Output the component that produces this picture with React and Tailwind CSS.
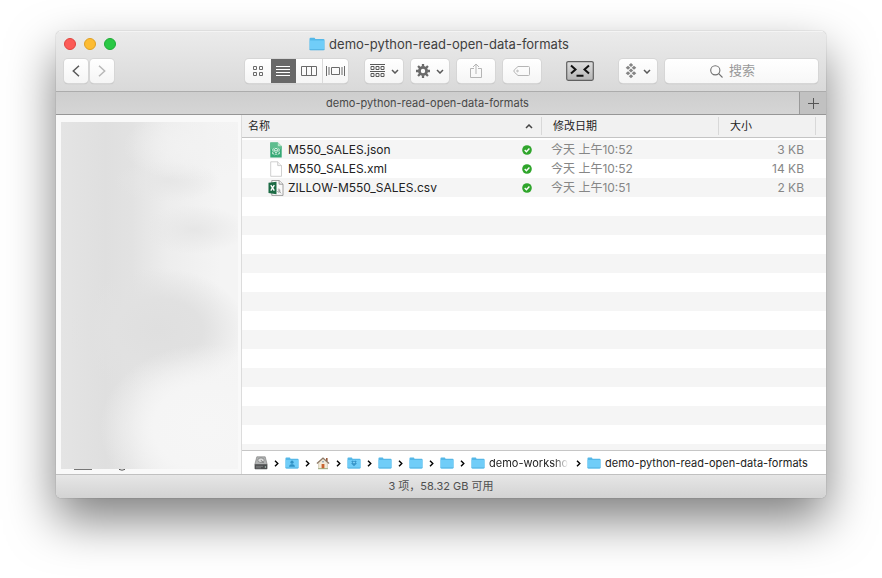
import { clsx } from 'clsx'

const FOLDER_NAME = 'demo-python-read-open-data-formats'

const files = [
  { name: 'M550_SALES.json', icon: JsonIcon, date: '今天 上午10:52', size: '3 KB' },
  { name: 'M550_SALES.xml', icon: BlankIcon, date: '今天 上午10:52', size: '14 KB' },
  { name: 'ZILLOW-M550_SALES.csv', icon: ExcelIcon, date: '今天 上午10:51', size: '2 KB' },
]

const path = [
  { id: 'disk', icon: DriveIcon },
  { id: 'users', icon: UsersFolderIcon },
  { id: 'home', icon: HomeIcon },
  { id: 'dropbox', icon: DropboxFolderIcon },
  { id: 'a', icon: FolderIcon },
  { id: 'b', icon: FolderIcon },
  { id: 'c', icon: FolderIcon },
  { id: 'workshop', icon: FolderIcon, label: 'demo-workshop', faded: true },
  { id: 'current', icon: FolderIcon, label: FOLDER_NAME },
]

function FolderIcon({ className = 'h-3 w-3.5', children }) {
  return (
    <svg viewBox="0 0 16 14" preserveAspectRatio="none" className={clsx('shrink-0', className)}>
      <path d="M.5 2Q.5.7 1.6.7h3.6Q5.9.7 6.3 1.9h8.2q1 0 1 1v9.2q0 1.2-1.1 1.2H1.6Q.5 13.3.5 12.1z" fill="#55b8e8" />
      <path d="M.8 3.4h14.4v8.8q0 .8-.8.8H1.6q-.8 0-.8-.8z" fill="#70cdf8" />
      <path d="M.6 12.6h14.8" stroke="#4faedd" strokeWidth=".8" />
      {children}
    </svg>
  )
}

function UsersFolderIcon() {
  return (
    <FolderIcon>
      <circle cx="8" cy="6" r="1.8" fill="#2f91c4" />
      <path d="M4.6 11.4q.2-2.6 2.4-3h2q2.2.4 2.4 3z" fill="#2f91c4" />
    </FolderIcon>
  )
}

function DropboxFolderIcon() {
  return (
    <FolderIcon>
      <path d="M4.8 5.2 6.6 4.2 8 5.3l1.4-1.1 1.8 1-1.2 1.3 1.2 1.2L8 10.8 4.8 7.7 6 6.5z" fill="#3896ca" />
      <path d="M6.4 6.5 8 5.6l1.6.9L8 7.6z" fill="#85d5f8" />
    </FolderIcon>
  )
}

function DriveIcon() {
  return (
    <svg viewBox="0 0 14 14" className="h-3.5 w-3.5 shrink-0">
      <path d="M2.8.8h8.4l2 7.8H.8z" fill="#b2b4b4" stroke="#777" strokeWidth=".6" />
      <ellipse cx="7" cy="4.2" rx="3.2" ry="2.3" fill="#d9dada" stroke="#787a7a" strokeWidth=".7" />
      <path d="m7 4.2 2.6 2.9" stroke="#666" strokeWidth=".9" />
      <rect x=".6" y="8.3" width="12.8" height="4.9" rx=".7" fill="#4d4f50" />
      <path d="M2 10.3h7M2 11.8h5" stroke="#8c8e8f" strokeWidth=".7" />
      <circle cx="11.4" cy="11" r=".7" fill="#bcd5ca" />
    </svg>
  )
}

function HomeIcon() {
  return (
    <svg viewBox="0 0 14 14" className="h-3.5 w-3.5 shrink-0">
      <path d="M10 2h1.6v3.5H10z" fill="#9b5b3d" />
      <path d="M2.6 6.6 7 2.7l4.4 3.9v5.9H2.6z" fill="#f3ead8" stroke="#b8a98e" strokeWidth=".5" />
      <path d="M.9 7.4 7 2l6.1 5.4" fill="none" stroke="#8d7967" strokeWidth="1.3" />
      <path d="M5.6 8h2.8v4.5H5.6z" fill="#c8642e" />
      <circle cx="7" cy="5.7" r=".8" fill="#6f8ca2" />
      <path d="M2 12.7h10" stroke="#8da36f" strokeWidth=".8" />
    </svg>
  )
}

function JsonIcon() {
  return (
    <svg viewBox="0 0 16 16" className="h-4 w-4 shrink-0">
      <path d="M2.3.5h7.5l3.9 3.7v11.3H2.3z" fill="#35a875" />
      <path d="M2.3.5h7.5l3.9 3.7v3H2.3z" fill="#5dbd8e" />
      <path d="M9.8.5v3.7h3.9z" fill="#b7e4c8" />
      <g fill="none" stroke="#e3f6ea" strokeWidth=".9">
        <circle cx="8" cy="9.6" r="1.1" />
        <circle cx="5.7" cy="8" r="1.1" />
        <circle cx="10.3" cy="8" r="1.1" />
        <path d="M4.7 9.7v2.2h1.4M11.3 9.7v2.2H9.9M6.6 12.8l1.4-1 1.4 1M6.8 6l1.2.9L9.2 6" />
      </g>
    </svg>
  )
}

function BlankIcon() {
  return (
    <svg viewBox="0 0 16 16" className="h-4 w-4 shrink-0">
      <path d="M2.7.8h7l3.8 3.8v10.7H2.7z" fill="#fff" stroke="#bbb" strokeWidth=".7" />
      <path d="M9.7.8v3.8h3.8" fill="#f3f3f3" stroke="#bbb" strokeWidth=".7" />
    </svg>
  )
}

function ExcelIcon() {
  return (
    <svg viewBox="0 0 16 16" className="h-4 w-4 shrink-0">
      <path d="M3.8.5h7.3l3.9 3.7v11.2H3.8z" fill="#fafafa" stroke="#888" strokeWidth=".8" />
      <path d="M11.1.5v3.7H15" fill="#eee" stroke="#888" strokeWidth=".8" />
      <path d="M9.8 9.3q1.7-.7 2 .4v2.6m0-1.6q-2.3-.1-2.3.9 0 1.2 2.3.1l1.3 1.7" fill="none" stroke="#999" strokeWidth=".8" />
      <path d="M.5 2.8 8.5 1.8v12.4L.5 13.1z" fill="#1c6b45" />
      <path d="m2.8 5.2 3.5 5.5M6.3 5.2l-3.5 5.5" stroke="#fff" strokeWidth="1.4" />
    </svg>
  )
}

function SyncedIcon() {
  return (
    <svg viewBox="0 0 10 10" className="h-2.5 w-2.5 shrink-0">
      <circle cx="5" cy="5" r="4.8" fill="#2fa52b" />
      <path d="m2.7 5.1 1.7 1.7 3-3.3" fill="none" stroke="#fff" strokeWidth="1.4" />
    </svg>
  )
}

function Chevron({ className, d = 'm1 1 3 3 3-3', viewBox = '0 0 8 5', width = 1.5 }) {
  return (
    <svg viewBox={viewBox} className={clsx('shrink-0', className)} fill="none" stroke="currentColor" strokeWidth={width}>
      <path d={d} />
    </svg>
  )
}

function ToolButton({ label, className, children }) {
  return (
    <button
      type="button"
      aria-label={label}
      className={clsx(
        'flex h-6 items-center justify-center rounded bg-linear-to-b from-white to-[#f5f5f5] shadow-[0_0_0_1px_#d6d6d6,0_1px_1px_#b0b0b0]',
        className,
      )}
    >
      {children}
    </button>
  )
}

function ViewSwitch() {
  const cell = 'flex flex-1 items-center justify-center'
  return (
    <div className="flex h-6 w-[103px] overflow-hidden rounded bg-linear-to-b from-white to-[#f5f5f5] text-[#6a6a6a] shadow-[0_0_0_1px_#d6d6d6,0_1px_1px_#b0b0b0]">
      <button type="button" aria-label="图标" className={cell}>
        <svg viewBox="0 0 12 12" className="h-3 w-3" fill="none" stroke="currentColor">
          <path d="M1.5 1.5h3v3h-3zM7.5 1.5h3v3h-3zM1.5 7.5h3v3h-3zM7.5 7.5h3v3h-3z" />
        </svg>
      </button>
      <button type="button" aria-label="列表" className={clsx(cell, 'bg-[#686868] text-white')}>
        <svg viewBox="0 0 14 12" className="h-3 w-3.5" stroke="currentColor">
          <path d="M0 1.5h14M0 4.5h14M0 7.5h14M0 10.5h14" />
        </svg>
      </button>
      <button type="button" aria-label="分栏" className={cell}>
        <svg viewBox="0 0 16 12" className="h-3 w-4" fill="none" stroke="currentColor">
          <path d="M.5 1.5h15v9H.5zM5.5 1.5v9M10.5 1.5v9" />
        </svg>
      </button>
      <button type="button" aria-label="封面流" className={clsx(cell, 'border-l border-[#dadada]')}>
        <svg viewBox="0 0 19 12" className="h-3 w-[19px]" fill="none" stroke="currentColor">
          <path d="M5.5 2.5h8v7h-8zM.5 1v10M3 2v8M18.5 1v10M16 2v8" />
        </svg>
      </button>
    </div>
  )
}

function Toolbar() {
  return (
    <div className="flex items-center pr-2 pl-2">
      <div className="flex gap-0.5">
        <ToolButton label="后退" className="w-6 text-[#595959]">
          <Chevron viewBox="0 0 8 12" d="M7 .7 1.3 6 7 11.3" className="h-3 w-2" />
        </ToolButton>
        <ToolButton label="前进" className="w-6 text-[#b8b8b8]">
          <Chevron viewBox="0 0 8 12" d="M1 .7 6.7 6 1 11.3" className="h-3 w-2" />
        </ToolButton>
      </div>
      <div className="ml-auto flex items-center">
        <ViewSwitch />
        <div className="ml-[17px] flex gap-2">
          <ToolButton label="排列" className="w-[38px] gap-1.5 text-[#595959]">
            <svg viewBox="0 0 15 14" className="h-3.5 w-[15px]" fill="none" stroke="currentColor">
              <path d="M0 .5h15M0 7.5h15M1 2.5h3v3H1zM6 2.5h3v3H6zM11 2.5h3v3h-3zM1 9.5h3v3H1zM6 9.5h3v3H6zM11 9.5h3v3h-3z" />
            </svg>
            <Chevron className="h-[5px] w-2" />
          </ToolButton>
          <ToolButton label="操作" className="w-[38px] gap-1.5 text-[#595959]">
            <svg viewBox="0 0 14 14" className="h-3.5 w-3.5" fill="none" stroke="#6a6a6a">
              <circle cx="7" cy="7" r="3.6" strokeWidth="2.8" />
              <path d="M7 0v2.6M7 11.4V14M0 7h2.6M11.4 7H14M2.05 2.05l1.9 1.9M10.05 10.05l1.9 1.9M11.95 2.05l-1.9 1.9M3.95 10.05l-1.9 1.9" strokeWidth="2.3" />
            </svg>
            <Chevron className="h-[5px] w-2" />
          </ToolButton>
          <ToolButton label="共享" className="w-[38px] text-[#b5b5b5]">
            <svg viewBox="0 0 12 16" className="h-4 w-3" fill="none" stroke="currentColor">
              <path d="M4 5.5H.5v9h11v-9H8M6 11V1M3 4l3-3 3 3" />
            </svg>
          </ToolButton>
          <ToolButton label="编辑标签" className="w-[38px] text-[#b5b5b5]">
            <svg viewBox="0 0 18 12" className="h-3 w-[18px]" fill="none" stroke="currentColor">
              <path d="M5 1.5h10.5q1 0 1 1v7q0 1-1 1H5L1.2 7Q.6 6 1.2 5z" />
              <circle cx="4.5" cy="6" r=".8" />
            </svg>
          </ToolButton>
        </div>
        <button type="button" aria-label="终端" className="ml-[25px]">
          <svg viewBox="0 0 28 20" className="h-5 w-7">
            <defs>
              <linearGradient id="term" x2="0" y2="1">
                <stop stopColor="#dedede" />
                <stop offset="1" stopColor="#b5b5b5" />
              </linearGradient>
            </defs>
            <rect x=".7" y=".7" width="26.6" height="18.6" rx="1.5" fill="url(#term)" stroke="#606060" strokeWidth="1.2" />
            <path d="m5 4.5 4.5 4L5 12.5M23 4.5l-4.5 4 4.5 4M10.5 14.7h7" fill="none" stroke="#111" strokeWidth="2" />
          </svg>
        </button>
        <div className="ml-[25px] flex gap-2">
          <ToolButton label="Dropbox" className="w-[38px] gap-1.5 text-[#595959]">
            <svg viewBox="0 0 12 16" className="h-4 w-3" fill="#858585">
              <path d="m6 0 2.2 2L6 4 3.8 2zM3 2.7l2.3 2L3 6.7l-2.3-2zM9 2.7l2.3 2L9 6.7l-2.3-2zM6 5.5l2.2 2L6 9.5l-2.2-2zM3 8.3l2.3 2-2.3 2-2.3-2zM9 8.3l2.3 2-2.3 2-2.3-2zM6 11.3l2.2 2-2.2 2-2.2-2z" />
            </svg>
            <Chevron className="h-[5px] w-2" />
          </ToolButton>
          <label className="flex h-6 w-[153px] items-center justify-center gap-1.5 rounded bg-linear-to-b from-white to-[#f7f7f7] pr-4 shadow-[0_0_0_1px_#d6d6d6,0_1px_1px_#b0b0b0]">
            <svg viewBox="0 0 13 13" className="h-[13px] w-[13px]" fill="none" stroke="#707070" strokeWidth="1.1">
              <circle cx="5.3" cy="5.3" r="4.6" />
              <path d="m8.7 8.7 3.8 3.8" />
            </svg>
            <input
              type="text"
              aria-label="搜索"
              placeholder="搜索"
              className="w-7 bg-transparent text-[13px] outline-none placeholder:text-[#999]"
            />
          </label>
        </div>
      </div>
    </div>
  )
}

function TitleBar() {
  return (
    <header className="flex h-[60px] flex-col border-t border-[#f4f4f4] bg-linear-to-b from-[#ebebeb] to-[#d9d9d9]">
      <div className="grid h-6 shrink-0 grid-cols-[1fr_auto_1fr] items-center px-2">
        <div className="flex gap-2">
          <button type="button" aria-label="关闭" className="h-3 w-3 rounded-full border border-[#e0443e] bg-[#fc5b57]" />
          <button type="button" aria-label="最小化" className="h-3 w-3 rounded-full border border-[#dfa023] bg-[#fdbc33]" />
          <button type="button" aria-label="缩放" className="h-3 w-3 rounded-full border border-[#1eab36] bg-[#2ac845]" />
        </div>
        <h1 className="flex items-center gap-1 pr-1 text-[13px] leading-4 text-[#404040]">
          <FolderIcon className="h-3.5 w-4" />
          {FOLDER_NAME}
        </h1>
      </div>
      <div className="pt-[3px]">
        <Toolbar />
      </div>
    </header>
  )
}

function TabBar() {
  return (
    <div className="flex h-6 border-y border-t-[#acacac] border-b-[#969696] bg-linear-to-b from-[#cecece] to-[#d5d5d5]">
      <button type="button" className="flex-1 text-center text-[11px] text-[#484848]">
        {FOLDER_NAME}
      </button>
      <button
        type="button"
        aria-label="新建标签页"
        className="flex w-[27px] items-center justify-center border-l border-[#999] bg-[#c1c1c1]"
      >
        <svg viewBox="0 0 11 11" className="h-[11px] w-[11px]" stroke="#555">
          <path d="M5.5 0v11M0 5.5h11" />
        </svg>
      </button>
    </div>
  )
}

function Sidebar() {
  return (
    <aside className="flex w-[185px] shrink-0 flex-col bg-[#f9f9f9] pt-[7px] pr-[3px] pb-[3px] pl-[5px]">
      <div className="flex-1 bg-[radial-gradient(60%_24%_at_82%_88%,#f6f6f6_0%,#f5f5f5_50%,transparent_100%),radial-gradient(40%_10%_at_75%_7%,#f2f2f2_0%,transparent_100%),radial-gradient(30%_7%_at_75%_31%,#e6e6e6_0%,transparent_100%),radial-gradient(30%_6%_at_60%_17%,#e6e6e6_0%,transparent_100%),radial-gradient(50%_18%_at_55%_60%,#dfdfdf_0%,#e1e1e1_50%,transparent_100%),linear-gradient(to_right,#e4e4e4_0%,#dfdfdf_25%,#e2e2e2_40%,#ededed_60%,#f4f4f4_90%,#f4f4f4_100%)]" />
      <svg viewBox="0 0 177 2" className="h-0.5 w-[177px]">
        <path d="M13 .5h18" stroke="#777" />
        <path d="M58 .4q3 1.6 6 0" fill="none" stroke="#555" />
      </svg>
    </aside>
  )
}

function FileTable() {
  const head = 'h-[23px] border-b border-[#c4c4c4] bg-[#f1f1f1] p-0 text-left font-normal'
  const divider = 'flex h-[18px] items-center border-l border-[#d8d8d8] pl-[11px]'
  return (
    <table className="w-full table-fixed border-separate border-spacing-0">
      <colgroup>
        <col />
        <col className="w-[177px]" />
        <col className="w-[97px]" />
        <col className="w-[11px]" />
      </colgroup>
      <thead className="text-[11px] text-[#222]">
        <tr>
          <th scope="col" className={head}>
            <div className="flex items-center justify-between pr-2 pl-1.5">
              名称
              <Chevron d="m1 4 3-3 3 3" className="h-[5px] w-2 text-[#444]" />
            </div>
          </th>
          <th scope="col" className={head}>
            <div className={divider}>修改日期</div>
          </th>
          <th scope="col" className={head}>
            <div className={divider}>大小</div>
          </th>
          <td className={head}>
            <div className="h-[18px] border-l border-[#d8d8d8]" />
          </td>
        </tr>
      </thead>
      <tbody className="text-xs leading-[19px]">
        <tr aria-hidden="true">
          <td colSpan={4} className="h-0.5 p-0" />
        </tr>
        {files.map(({ name, icon: Icon, date, size }) => (
          <tr key={name} className="h-[19px] even:bg-[#f5f5f5]">
            <td className="p-0">
              <div className="flex h-[19px] items-center pr-[9px] pl-[26px] text-[#222]">
                <Icon />
                <span className="ml-1 flex-1">{name}</span>
                <SyncedIcon />
              </div>
            </td>
            <td className="p-0 pl-2.5 text-[#868686]">
              <div className="h-[19px]">{date}</div>
            </td>
            <td className="p-0 pr-[11px] text-right text-[#868686]">
              <div className="h-[19px]">{size}</div>
            </td>
            <td className="p-0" />
          </tr>
        ))}
      </tbody>
    </table>
  )
}

function PathBar() {
  return (
    <nav aria-label="路径" className="flex h-6 items-center gap-1.5 border-t border-[#c6c6c6] pt-px pl-3 text-[11px] text-[#222]">
      {path.map(({ id, icon: Icon, label, faded }, i) => (
        <div key={id} className="flex items-center gap-1.5">
          {i > 0 && <Chevron viewBox="0 0 5 7" d="M1 .7 3.8 3.5 1 6.3" width={1.4} className="h-[7px] w-[5px] text-black" />}
          <a href={`#${id}`} className="flex items-center gap-1">
            <Icon />
            {label && (
              <span
                className={clsx(
                  'whitespace-nowrap',
                  faded && 'w-[81px] overflow-hidden mask-[linear-gradient(to_right,black_80%,transparent_98%)]',
                )}
              >
                {label}
              </span>
            )}
          </a>
        </div>
      ))}
    </nav>
  )
}

export default function App() {
  return (
    <div className="flex min-h-screen bg-white px-14 pt-[31px] pb-20 font-[Inter,'Noto_Sans_CJK_SC',sans-serif]">
      <main className="flex min-w-0 flex-1 flex-col overflow-hidden rounded-[5px] shadow-[0_0_1px_rgba(0,0,0,0.5),0_22px_48px_rgba(0,0,0,0.5)]">
        <TitleBar />
        <TabBar />
        <div className="flex flex-1">
          <Sidebar />
          <section className="flex min-w-0 flex-1 flex-col border-l border-[#dcdcdc] bg-white">
            <FileTable />
            <div className="flex-1 bg-[repeating-linear-gradient(to_bottom,#fff_0px,#fff_19px,#f5f5f5_19px,#f5f5f5_38px)]" />
            <PathBar />
          </section>
        </div>
        <footer className="flex h-6 items-center justify-center border-t border-[#c0c0c0] bg-linear-to-b from-[#e6e6e6] to-[#d3d3d3] text-[11px] text-[#505050]">
          3 项，58.32 GB 可用
        </footer>
      </main>
    </div>
  )
}
